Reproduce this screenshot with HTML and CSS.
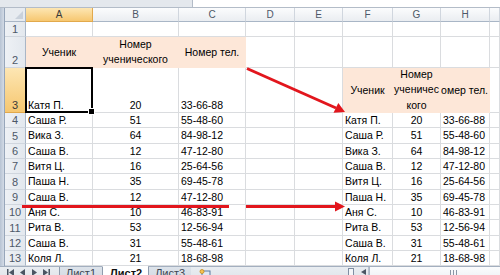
FILE: index.html
```html
<!DOCTYPE html>
<html lang="ru">
<head>
    <meta charset="UTF-8">
    <meta name="viewport" content="width=device-width, initial-scale=1.0">
    <title>Лист2 - Excel</title>
    <link rel="stylesheet" href="styles.css">
</head>
<body>
    <div class="window">
        <div class="formula-bar">
            <div class="name-box"></div>
            <div class="formula-input"></div>
        </div>

        <div class="workspace">
            <div class="frame-edge"></div>
            <div class="sheet">
                <div class="row head">
                    <div class="corner"></div>
                    <div class="ch sel">A</div><div class="ch">B</div><div class="ch">C</div><div class="ch">D</div>
                    <div class="ch">E</div><div class="ch">F</div><div class="ch">G</div><div class="ch">H</div><div class="ch"></div>
                </div>
                <div class="row r1">
                    <div class="rh">1</div>
                    <div class="c"></div><div class="c"></div><div class="c"></div><div class="c"></div>
                    <div class="c"></div><div class="c"></div><div class="c"></div><div class="c"></div><div class="c"></div>
                </div>
                <div class="row r2">
                    <div class="rh">2</div>
                    <div class="c peach mid">Ученик</div>
                    <div class="c peach mid"><span class="lines">Номер<br>ученического</span></div>
                    <div class="c peach mid">Номер тел.</div>
                    <div class="c"></div><div class="c"></div><div class="c"></div><div class="c"></div><div class="c"></div><div class="c"></div>
                </div>
                <div class="row r3">
                    <div class="rh sel">3</div>
                    <div class="c bottom active">Катя П.</div>
                    <div class="c bottom mid">20</div>
                    <div class="c bottom">33-66-88</div>
                    <div class="c"></div><div class="c"></div>
                    <div class="c peach mid">Ученик</div>
                    <div class="c peach mid"><span class="lines">Номер<br>ученичес<br>кого</span></div>
                    <div class="c peach clipped">Номер тел.</div>
                    <div class="c"></div>
                </div>
                <div class="row">
                    <div class="rh">4</div>
                    <div class="c">Саша Р.</div><div class="c mid">51</div><div class="c">55-48-60</div><div class="c"></div><div class="c"></div>
                    <div class="c">Катя П.</div><div class="c mid">20</div><div class="c">33-66-88</div><div class="c"></div>
                </div>
                <div class="row">
                    <div class="rh">5</div>
                    <div class="c">Вика З.</div><div class="c mid">64</div><div class="c">84-98-12</div><div class="c"></div><div class="c"></div>
                    <div class="c">Саша Р.</div><div class="c mid">51</div><div class="c">55-48-60</div><div class="c"></div>
                </div>
                <div class="row">
                    <div class="rh">6</div>
                    <div class="c">Саша В.</div><div class="c mid">12</div><div class="c">47-12-80</div><div class="c"></div><div class="c"></div>
                    <div class="c">Вика З.</div><div class="c mid">64</div><div class="c">84-98-12</div><div class="c"></div>
                </div>
                <div class="row">
                    <div class="rh">7</div>
                    <div class="c">Витя Ц.</div><div class="c mid">16</div><div class="c">25-64-56</div><div class="c"></div><div class="c"></div>
                    <div class="c">Саша В.</div><div class="c mid">12</div><div class="c">47-12-80</div><div class="c"></div>
                </div>
                <div class="row">
                    <div class="rh">8</div>
                    <div class="c">Паша Н.</div><div class="c mid">35</div><div class="c">69-45-78</div><div class="c"></div><div class="c"></div>
                    <div class="c">Витя Ц.</div><div class="c mid">16</div><div class="c">25-64-56</div><div class="c"></div>
                </div>
                <div class="row">
                    <div class="rh">9</div>
                    <div class="c">Саша В.</div><div class="c mid">12</div><div class="c">47-12-80</div><div class="c"></div><div class="c"></div>
                    <div class="c">Паша Н.</div><div class="c mid">35</div><div class="c">69-45-78</div><div class="c"></div>
                </div>
                <div class="row">
                    <div class="rh">10</div>
                    <div class="c">Аня С.</div><div class="c mid">10</div><div class="c">46-83-91</div><div class="c"></div><div class="c"></div>
                    <div class="c">Аня С.</div><div class="c mid">10</div><div class="c">46-83-91</div><div class="c"></div>
                </div>
                <div class="row">
                    <div class="rh">11</div>
                    <div class="c">Рита В.</div><div class="c mid">53</div><div class="c">12-56-94</div><div class="c"></div><div class="c"></div>
                    <div class="c">Рита В.</div><div class="c mid">53</div><div class="c">12-56-94</div><div class="c"></div>
                </div>
                <div class="row">
                    <div class="rh">12</div>
                    <div class="c">Саша В.</div><div class="c mid">31</div><div class="c">55-48-61</div><div class="c"></div><div class="c"></div>
                    <div class="c">Саша В.</div><div class="c mid">31</div><div class="c">55-48-61</div><div class="c"></div>
                </div>
                <div class="row">
                    <div class="rh">13</div>
                    <div class="c">Коля Л.</div><div class="c mid">21</div><div class="c">18-68-98</div><div class="c"></div><div class="c"></div>
                    <div class="c">Коля Л.</div><div class="c mid">21</div><div class="c">18-68-98</div><div class="c"></div>
                </div>
            </div>
        </div>

        <div class="sheet-tabs">
            <div class="tab-nav">
                <svg width="8" height="7" viewBox="0 0 8 7"><rect x="0" y="0" width="1.5" height="7" fill="#4a5563"/><path d="M2 3.5 L7 0 L7 7 Z" fill="#4a5563"/></svg>
                <svg width="6" height="7" viewBox="0 0 6 7"><path d="M0 3.5 L5 0 L5 7 Z" fill="#4a5563"/></svg>
                <svg width="6" height="7" viewBox="0 0 6 7"><path d="M6 3.5 L1 0 L1 7 Z" fill="#4a5563"/></svg>
                <svg width="8" height="7" viewBox="0 0 8 7"><path d="M6 3.5 L1 0 L1 7 Z" fill="#4a5563"/><rect x="6.5" y="0" width="1.5" height="7" fill="#4a5563"/></svg>
            </div>
            <div class="tab">Лист1</div>
            <div class="tab current">Лист2</div>
            <div class="tab">Лист3</div>
            <div class="tab-new">
                <svg width="12" height="9" viewBox="0 0 12 9"><rect x="3" y="2" width="8" height="7" fill="#dfe8f3" stroke="#5b7aa0"/><circle cx="3" cy="2.5" r="2" fill="#f6c453" stroke="#c48a1c" stroke-width="0.8"/></svg>
            </div>
            <div class="spacer"></div>
            <div class="hscroll">
                <div class="splitter"></div>
                <div class="scroll-btn">
                    <svg width="5" height="6" viewBox="0 0 5 6"><path d="M0 3 L5 0 L5 6 Z" fill="#4a5563"/></svg>
                </div>
                <div class="scroll-thumb"><span class="grip"></span></div>
            </div>
        </div>

        <svg class="arrows" width="500" height="275" viewBox="0 0 500 275">
            <line x1="247" y1="68.5" x2="336" y2="108" />
            <polygon points="345,112 333.5,112.8 338.3,103" />
            <line x1="22" y1="206.5" x2="229" y2="206.5" />
            <line x1="246" y1="206.5" x2="336" y2="206.5" />
            <polygon points="345,206.5 335,201.5 335,211.5" />
        </svg>
    </div>
</body>
</html>
```

FILE: styles.css
```css
body {
    margin: 0;
    font-family: "Liberation Sans", Arial, sans-serif;
    font-size: 10.5px;
    color: #000;
    background: #fff;
}
.window {
    position: relative;
    width: 500px;
    height: 275px;
    overflow: hidden;
    display: flex;
    flex-direction: column;
}

/* formula bar remains */
.formula-bar {
    height: 7px;
    flex: none;
    display: flex;
    border-bottom: 1px solid #b3bcc8;
}
.name-box {
    width: 192px;
    background: #e4e8ed;
}
.formula-input {
    flex: 1;
    background: #fff;
    border-left: 1px solid #b3bcc8;
}

.workspace {
    display: flex;
    flex: none;
}
.frame-edge {
    width: 4px;
    background: linear-gradient(90deg, #b7c3d3, #d3dbe6);
    border-right: 1px solid #97a6ba;
}
.sheet {
    flex: 1;
}

/* grid rows */
.row {
    display: grid;
    grid-template-columns: 21px 67px 86px 67px 49px 48px 50px 48px 49px 1fr;
    height: 15.33px;
}
.row.head { height: 14px; }
.row.r1 { height: 15px; }
.row.r2 { height: 31px; }
.row.r3 { height: 45px; }

.c {
    box-sizing: border-box;
    border-right: 1px solid #dadcdf;
    border-bottom: 1px solid #dadcdf;
    padding: 0 2px;
    display: flex;
    align-items: center;
    white-space: nowrap;
    overflow: hidden;
    line-height: 14px;
}
.c.mid {
    justify-content: center;
    text-align: center;
}
.c.clipped {
    justify-content: flex-end;
    padding: 0 1px 0 0;
}
.c.bottom {
    align-items: flex-end;
    line-height: 12px;
    padding-bottom: 1px;
}
.c.peach {
    background: #fde7d8;
    border-color: #fde7d8;
}
.lines {
    line-height: 15.5px;
}
.c.active {
    position: relative;
    overflow: visible;
}
.c.active::before {
    content: "";
    position: absolute;
    left: -1px;
    top: -1px;
    right: -1px;
    bottom: -1px;
    border: 2px solid #000;
}
.c.active::after {
    content: "";
    position: absolute;
    right: -3px;
    bottom: -3px;
    width: 5px;
    height: 5px;
    background: #000;
    border: 1px solid #fff;
}

/* headers */
.corner {
    position: relative;
    background: #e7ebf0;
    border-right: 1px solid #a9b6c6;
    border-bottom: 1px solid #a9b6c6;
    box-sizing: border-box;
}
.corner::after {
    content: "";
    position: absolute;
    right: 2px;
    bottom: 2px;
    border-left: 8px solid transparent;
    border-bottom: 8px solid #c9d1db;
}
.ch {
    box-sizing: border-box;
    background: linear-gradient(#fbfcfd, #eaedf1);
    border-right: 1px solid #d0d6de;
    border-bottom: 1px solid #a9b6c6;
    color: #4d5868;
    font-size: 10px;
    display: flex;
    align-items: center;
    justify-content: center;
}
.rh {
    box-sizing: border-box;
    background: linear-gradient(90deg, #eef1f5, #e3e8ee);
    border-right: 1px solid #a9b6c6;
    border-bottom: 1px solid #d0d6de;
    color: #4d5868;
    font-size: 11px;
    display: flex;
    align-items: flex-end;
    justify-content: center;
    padding-bottom: 1px;
    line-height: 12px;
}
.ch.sel,
.rh.sel {
    background: linear-gradient(#fde6b3, #f6c770);
    border-color: #e2a94c;
    color: #3a3a3a;
}

/* sheet tabs */
.sheet-tabs {
    flex: none;
    height: 16px;
    display: flex;
    align-items: stretch;
    background: linear-gradient(#e9edf1, #dde2e8);
    border-top: 1px solid #a3afbf;
    font-size: 11px;
    color: #333;
}
.tab-nav {
    width: 52px;
    padding-left: 7px;
    display: flex;
    gap: 5px;
    align-items: flex-start;
    padding-top: 2px;
}
.tab {
    padding: 0 6px;
    line-height: 12px;
    background: linear-gradient(#dde3ea, #cfd7e1);
    border-left: 1px solid #8f9cae;
    color: #3d4652;
}
.tab.current {
    background: #fff;
    font-weight: bold;
    color: #111;
    border-top: 1px solid #fff;
    margin-top: -1px;
    padding: 0 6px 0 7px;
}
.tab:last-of-type {
    border-right: 1px solid #8f9cae;
}
.tab-new {
    padding: 1px 6px 0 8px;
}
.spacer {
    flex: 1;
}
.hscroll {
    width: 152px;
    display: flex;
    align-items: stretch;
}
.splitter {
    width: 4px;
    margin: 1px 4px 0 0;
    border: 1px solid #7f8ea3;
    border-bottom: none;
    background: #f4f6f8;
}
.scroll-btn {
    width: 10px;
    display: flex;
    justify-content: center;
    padding-top: 2px;
    border-right: 1px solid #b8c2cf;
}
.scroll-thumb {
    flex: 1;
    position: relative;
    background: linear-gradient(#fbfcfd, #e9edf2);
    border-left: 1px solid #aeb9c7;
}
.grip {
    position: absolute;
    left: 80px;
    top: 3px;
    width: 7px;
    height: 6px;
    background: repeating-linear-gradient(90deg, #8a96a6 0 1px, transparent 1px 3px);
}

/* red annotation arrows */
.arrows {
    position: absolute;
    left: 0;
    top: 0;
    pointer-events: none;
}
.arrows line {
    stroke: #e2161d;
    stroke-width: 3;
}
.arrows polygon {
    fill: #e2161d;
}
```
